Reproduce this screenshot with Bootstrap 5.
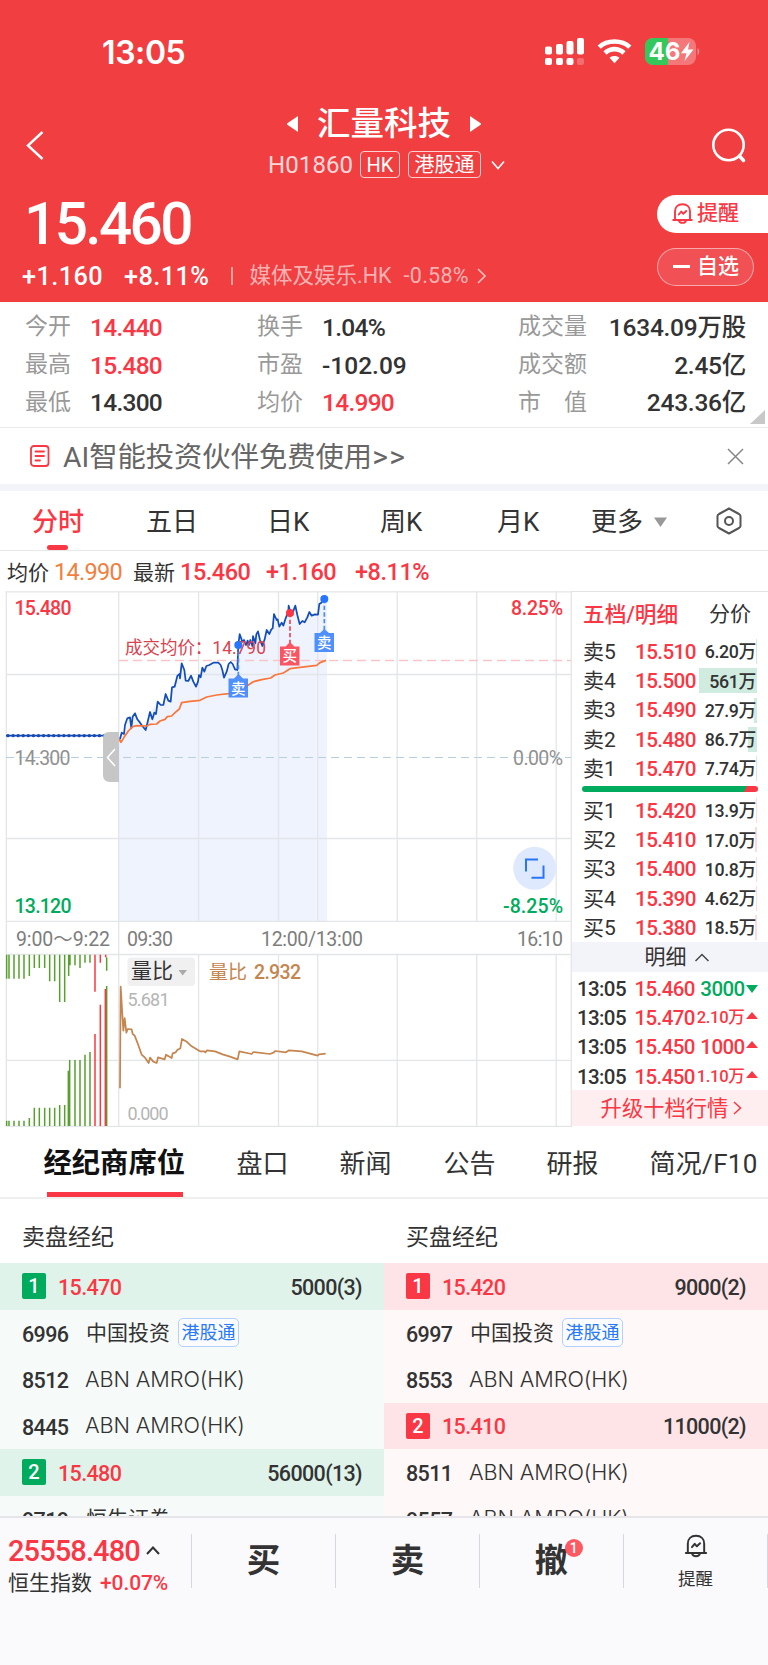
<!DOCTYPE html>
<html lang="zh-CN">
<head>
<meta charset="utf-8">
<meta name="viewport" content="width=device-width, initial-scale=1">
<title>汇量科技 H01860</title>
<link href="https://cdn.jsdelivr.net/npm/bootstrap@5.3.0/dist/css/bootstrap.min.css" rel="stylesheet">
<style>
:root{--up:#fa3744;--down:#00ab5e;--ink:#333;--top:#f03e41}
body{width:768px;height:1665px;overflow:hidden;background:#fff;color:var(--ink);font-family:Roboto,"Noto Sans CJK SC",sans-serif;line-height:1;font-size:22px}
.num{font-family:Roboto,"Noto Sans CJK SC",sans-serif;font-weight:500;letter-spacing:-.03em;white-space:nowrap}
.up{color:var(--up)}.down{color:var(--down)}
svg{display:block;flex:none}
span,div{white-space:nowrap}
/* header */
.hero{height:302px;background:var(--top);color:#fff}
.statusbar{height:97px;padding:0 67px 4px 102px}
.clock{font:600 32px/1 Inter,sans-serif;letter-spacing:-.4px}
.navrow{height:96px;padding:0 22px 0 26px}
.stock{font-size:33.5px;font-weight:500}
.outlined{border:1.5px solid rgba(255,255,255,.75);border-radius:4px;height:27px;font-size:20px}
.price{font-size:58.5px;letter-spacing:-2.6px}
.chg{font-size:25.3px;letter-spacing:.4px}
.pill-a{height:38px;width:111px;background:#fff;color:var(--up);border-radius:19px 0 0 19px;font-size:21px;font-weight:500}
.pill-b{height:38px;width:97px;background:rgba(255,255,255,.1);border:1.5px solid rgba(255,255,255,.5);border-radius:19px;font-size:21px;font-weight:500}
.soft{color:rgba(255,255,255,.62)}
/* statistics */
.stats{height:126px;border-bottom:1.5px solid #ebebeb;display:grid;grid-template-columns:65px 167px 65px 196px 1fr;grid-auto-rows:37.7px;padding:6px 22px 0 25px;align-items:center}
.stats .lbl{color:#999;font-size:23px}
.stats .num{font-size:24.5px;padding-top:3px}
.stats div .num{letter-spacing:-.01em}
.notice{height:56px;padding:0 24px 0 30px;color:#666;font-size:28.3px}
.gapband{height:7px;background:#f2f4f9}
.periods{height:60px;border-bottom:1.5px solid #e8e8e8;display:grid;grid-template-columns:114px 121px 113px 117px 94px 124px 1fr;padding:2px 0 0 32px;align-items:center;font-size:26px}
.periods .on{color:var(--up);font-weight:500}
.periods .on::after{content:"";position:absolute;left:15px;bottom:-15px;width:21px;height:5px;border-radius:3px;background:var(--up)}
.quote{height:40px;display:grid;grid-template-columns:47px 79px 47px 86px 89px 1fr;padding:4px 0 0 7px;align-items:center;font-size:21px}
.quote .num{font-size:23.5px;font-weight:400}
.quote b.num{font-weight:500;letter-spacing:-.02em}
/* order book */
.book{width:196px;height:536px;border-top:1.5px solid #e2e2e2}
.bookhead{height:44px;padding:1px 17px 0 11px;font-size:21.7px}
.lv{height:29.3px;display:grid;grid-template-columns:52px 61px 1fr;margin:0 11px 0 11px;align-items:center;font-size:21px}
.lv span{padding-top:1px}
.lv .num{font-size:20.7px}
.lv .vol{height:25px;font-size:17.8px;letter-spacing:-.02em;padding-right:1px}
.balance{height:6px;margin:2.5px 10px 4px 10px;border-radius:3px;background:linear-gradient(120deg,var(--down) 0 92%,var(--up) 92%)}
.detail{height:30px;background:#f3f4f9;font-size:21px;padding-left:13px}
.tick{height:29.3px;display:grid;grid-template-columns:57.5px 60px 1fr;padding:4px 10.500px 0 5px;align-items:center}
.tick .num{font-size:20.5px}
.tick .sm{font-size:16.6px;letter-spacing:-.02em}
.upgrade{height:36.5px;background:#ffeef0;font-size:21.3px;padding:1px 0 0 3px}
/* broker section */
.sections{height:72px;border-bottom:2px solid #efefef;display:grid;grid-template-columns:193px 103px 104px 103px 103px 1fr;padding:4px 0 0 43.500px;align-items:center;font-size:26px}
.sections .on{font-size:28.3px;font-weight:700;color:#111}
.sections .on::after{content:"";position:absolute;left:3px;bottom:-18.5px;width:136px;height:5px;background:var(--up)}
.brokers{height:317px;overflow:hidden}
.brokers .ttl{height:64px;font-size:23px;padding:13px 0 0 22px}
.side{width:384px;background:#f6fbf9}
.side.buy{background:#fff8f8}
.ttl{background:#fff}
.lvl{height:46.5px;background:#dff3ea;padding:0 22px 0 22px}
.buy .lvl{background:#fee4e7}
.rank{width:24px;height:26px;border-radius:2px;background:var(--down);color:#fff;font-size:20px;font-weight:500;margin-right:12px}
.buy .rank{background:var(--up)}
.lvl .num{font-size:21.5px;padding-top:2px}
.bk{height:46.5px;padding-left:22px}
.bk .num{font-size:21.5px;width:64px;padding-top:3px}
.bk .nm{font-size:21px;padding-top:1px}
.bk .en{font:300 21.7px/1 Inter,sans-serif;letter-spacing:-.1px;margin-left:-1px;padding-top:1px}
.hk{width:61px;height:29px;border:1.5px solid #b4d0fc;border-radius:5px;color:#2878fa;font-size:18px;background:#fafcff}
/* bottom bar */
.dock{height:149px;background:#fafafc;border-top:2px solid #e6e6ea}
.dock .cell{width:144px;height:54px;margin-top:16px;border-right:1.5px solid #d8d8dc;font-size:33.5px;font-weight:700}
.dot{position:absolute;left:30px;top:-5px;width:18px;height:18px;border-radius:50%;background:#fd5963;color:#fff;font-size:14px;font-weight:500}
</style>
</head>
<body>
<svg width="0" height="0" class="position-absolute"><defs>
<g id="bell" fill="none" stroke="currentColor" stroke-linecap="round" stroke-linejoin="round"><path d="M1.2 17H19.8M3 17V8.5C3 4 6 1.2 10.500 1.200S18 4 18 8.500V17M7 17.500C7.500 20.600 13.500 20.600 14 17.500M6.800 11.500L9.300 8.500 11.300 10.800 14.200 8"/></g>
</defs></svg>
<header class="hero">
  <div class="statusbar d-flex align-items-center">
    <div class="clock me-auto" style="padding-top:13px">13:05</div>
    <div class="d-flex align-items-center" style="padding-top:9px">
      <svg width="156" height="28" viewBox="0 0 156 28" fill="#fff">
        <rect x="0" y="9.500" width="7" height="8" rx="2"/><rect x="11" y="7" width="7" height="10.500" rx="2"/><rect x="21.500" y="4" width="7" height="13.500" rx="2"/><rect x="32" y="1" width="7" height="16.500" rx="2"/>
        <rect x="0" y="21" width="7" height="7" rx="2"/><rect x="11" y="21" width="7" height="7" rx="2"/><rect x="21.500" y="21" width="7" height="7" rx="2"/><rect x="32" y="21" width="7" height="7" rx="2" opacity=".25"/>
        <g fill="none" stroke="#fff" stroke-width="4.600"><path d="M54.200 10.200C62 2.600 77 2.600 84.800 10.200"/><path d="M60 16C65.500 10.800 73.500 10.800 79 16"/></g><path d="M64.500 20.700C67 18.400 72 18.400 74.500 20.700L69.500 26.200Z"/>
        <rect x="100" y="1" width="51" height="27" rx="8" opacity=".3"/><path d="M123 1V28H108A8 8 0 0 1 100 20V9A8 8 0 0 1 108 1Z" fill="#34c759"/><path d="M152.500 10.500Q156 14.500 152.500 18.500Z" opacity=".4"/>
        <text x="103.500" y="22.800" font-family="Inter" font-weight="700" font-size="24.500" textLength="32" lengthAdjust="spacingAndGlyphs">46</text><path d="M144.500 5L136 16.200H141.500L139.500 24L148.500 12.600H143Z"/>
      </svg>
    </div>
  </div>
  <div class="navrow d-flex align-items-center">
    <svg width="18" height="29" viewBox="0 0 18 29" fill="none" stroke="#fff" stroke-width="2.400"><path d="M16.500 1L2 14.500 16.500 28"/></svg>
    <div class="flex-fill d-flex flex-column align-items-center" style="padding:0 0 5px 12px">
      <div class="d-flex align-items-center" style="gap:18px">
        <svg width="12" height="16" fill="#fff"><path d="M11 0V16L0 8.500V7.500Z"/></svg><span class="stock">汇量科技</span><svg width="12" height="16" fill="#fff"><path d="M1 0V16L12 8.500V7.500Z"/></svg>
      </div>
      <div class="d-flex align-items-center" style="margin-top:11px;padding-left:5px">
        <span style="font-size:24px;letter-spacing:.1px;width:92px;opacity:.8">H01860</span>
        <span class="outlined d-flex align-items-center justify-content-center" style="width:40px">HK</span>
        <span class="outlined d-flex align-items-center justify-content-center" style="width:73px;margin:0 10px 0 8px">港股通</span>
        <svg width="14" height="10" fill="none" stroke="#fff" stroke-width="1.600"><path d="M1 1.500L7 8.500 13 1.500"/></svg>
      </div>
    </div>
    <svg width="34" height="35" viewBox="0 0 34 35" fill="none" stroke="#fff" stroke-width="2.600" stroke-linecap="round"><circle cx="16.500" cy="17" r="15.200"/><path d="M27.500 28L31.500 32.500" stroke-width="3.500"/></svg>
  </div>
  <div class="d-flex justify-content-between">
    <div style="padding-left:22px">
      <div class="num price" style="padding:2px 0 1px 2px">15.460</div>
      <div class="d-flex align-items-center" style="margin-top:9px">
        <span class="num chg" style="width:102px">+1.160</span><span class="num chg" style="width:107px">+8.11%</span>
        <span class="bg-white opacity-50" style="width:1.500px;height:18px;margin-right:17px"></span>
        <span class="soft" style="font-size:21.500px;width:154px">媒体及娱乐.HK</span><span class="soft" style="font-size:21.500px;letter-spacing:.3px;width:73px">-0.58%</span>
        <svg width="9" height="16" fill="none" stroke="#fff" stroke-width="1.600" opacity=".65"><path d="M1 1L8 8 1 15"/></svg>
      </div>
    </div>
    <div style="padding-top:1.500px">
      <div class="pill-a d-flex align-items-center" style="padding-left:15px"><svg width="21" height="21" viewBox="0 0 21 21" stroke-width="1.900"><use href="#bell"/></svg><span style="margin-left:4px">提醒</span></div>
      <div class="pill-b d-flex align-items-center" style="margin-top:15px;padding-left:15px"><span class="bg-white" style="width:17px;height:2.500px;margin-right:7px"></span>自选</div>
    </div>
  </div>
</header>
<section class="stats position-relative">
  <span class="lbl">今开</span><span class="num up">14.440</span><span class="lbl">换手</span><span class="num">1.04%</span><div class="d-flex justify-content-between align-items-center"><span class="lbl">成交量</span><span class="num">1634.09万股</span></div>
  <span class="lbl">最高</span><span class="num up">15.480</span><span class="lbl">市盈</span><span class="num" style="letter-spacing:0">-102.09</span><div class="d-flex justify-content-between align-items-center"><span class="lbl">成交额</span><span class="num">2.45亿</span></div>
  <span class="lbl">最低</span><span class="num">14.300</span><span class="lbl">均价</span><span class="num up">14.990</span><div class="d-flex justify-content-between align-items-center"><span class="lbl">市<span style="margin-left:23px">值</span></span><span class="num">243.36亿</span></div>
  <svg class="position-absolute" style="right:3px;bottom:3px" width="15" height="14" fill="#c8c8c8"><path d="M15 0V14H0Z"/></svg>
</section>
<section class="notice d-flex align-items-center">
  <svg width="20" height="22" fill="none" stroke="#fa3744" stroke-width="1.800" stroke-linecap="round"><rect x="1" y="1" width="17.500" height="20" rx="3"/><path d="M5.500 6.500H14M5.500 11H14M5.500 15.500H10"/></svg>
  <span style="margin-left:13px;padding-top:4px">AI智能投资伙伴免费使用<span style="font-size:30px;letter-spacing:1.500px;line-height:.8">&gt;&gt;</span></span>
  <svg class="ms-auto" width="17" height="17" fill="none" stroke="#888" stroke-width="1.500"><path d="M1 1L16 16M16 1L1 16"/></svg>
</section>
<div class="gapband"></div>
<nav class="periods">
  <span class="on position-relative">分时</span><span>五日</span><span>日K</span><span>周K</span><span>月K</span>
  <span class="d-flex align-items-center">更多<svg style="margin-left:10px" width="15" height="10" fill="#999"><path d="M1 .5H14L7.500 10Z"/></svg></span>
  <svg style="margin-top:-2px" width="28" height="28" viewBox="0 0 28 28" fill="none" stroke="#555" stroke-width="2" stroke-linejoin="round"><path d="M14 1.500L24 7Q25.500 8 25.500 9V19Q25.500 20 24 21L14 26.500 4 21Q2.500 20 2.500 19V9Q2.500 8 4 7Z"/><circle cx="14" cy="14" r="4"/></svg>
</nav>
<div class="quote">
  <span>均价</span><span class="num" style="color:#f08040">14.990</span><span>最新</span><b class="num up">15.460</b><b class="num up">+1.160</b><b class="num up">+8.11%</b>
</div>
<main class="d-flex">
  <svg width="572" height="536" viewBox="0 591 572 536" font-family='Roboto,"Noto Sans CJK SC",sans-serif' font-size="19.500">
    <g transform="translate(110 590) scale(.33333)"><path fill="#eef3fe" d="M26 993V440L42 432 52 385 60 382 68 380 75 370 90 398 107 420 120 366 143 335 160 345 167 312 182 335 186 292 202 258 215 220 227 272 243 257 258 290 277 233 298 225 325 218 342 263 362 216 382 240 389 132 413 152 427 168 444 124 457 168 470 120 488 115 492 72 508 110 535 65 556 47 569 102 598 66 624 74 628 42 643 27 651 27V993Z"/></g>
    <path fill="none" stroke="#e4e5e8" stroke-width="1.300" d="M6 591.800H572M6 674.500H572M6 838.500H572M6 921.300H572M6 954.500H572M6 1060.300H572M6 1126.300H572M6.300 591V1127M118.700 591V1127M198.600 591V921M278.500 591V921M317.700 591V921M397.200 591V921M476.700 591V921M556.200 591V921M198.600 954V1127M278.500 954V1127M317.700 954V1127M397.200 954V1127M476.700 954V1127M556.200 954V1127M571.300 591V1127"/>
    <path d="M6 757.500H571" stroke="#b9cfdf" stroke-width="1.200" stroke-dasharray="8 5"/>
    <path d="M119 660.500H571" stroke="#f9c5cb" stroke-width="1.300" stroke-dasharray="9 5"/>
    <path d="M6 735.700H107L108 737H119" fill="none" stroke="#134bb3" stroke-width="1.800"/><path d="M8 735.700H106" stroke="#134bb3" stroke-width="3.300" stroke-linecap="round" stroke-dasharray="0 5.080"/>
    <g transform="translate(110 590) scale(.33333)" fill="none" stroke-width="5.200" stroke-linejoin="round">
      <path stroke="#124db8" d="M30 448L35 428 42 432 45 405 52 385 60 382 64 415 68 380 75 370 82 388 90 398 97 408 107 420 112 400 120 366 127 388 133 368 138 372 143 335 152 345 160 345 167 312 175 332 182 335 186 292 194 290 202 258 209 252 210 265 215 220 223 240 227 272 235 273 243 257 250 275 258 290 264 275 267 255 272 262 277 233 283 245 289 228 298 225 310 218 325 218 332 225 337 240 342 263 350 245 356 222 362 216 368 222 375 238 382 240 385 165 389 132 397 155 402 150 408 165 413 152 417 165 421 150 427 168 429 138 436 160 439 133 444 124 450 150 457 168 464 148 470 120 478 132 484 118 488 115 492 72 500 90 503 88 508 110 515 98 520 107 527 85 535 65 536 47 541 66 548 68 556 47 562 75 569 102 577 93 584 97 592 82 598 66 605 77 615 73 624 74 628 42 634 38 643 27"/>
      <path stroke="#f9763a" d="M27 447L33 457 42 442 55 423 68 410 80 407 110 408 120 403 140 402 150 393 165 388 172 380 185 378 195 368 208 357 215 338 240 334 270 331 290 321 320 315 355 311 385 305 415 285 430 275 455 269 482 264 495 255 520 249 540 236 570 232 620 226 630 218 648 211"/>
      <path stroke="#4a8cff" stroke-dasharray="13 7" d="M385 165V262M643 27V125"/><path stroke="#f4485a" stroke-dasharray="13 7" d="M540 69V165"/>
    </g>
    <text x="125" y="653.500" fill="#d9424f" font-size="18" textLength="141" lengthAdjust="spacingAndGlyphs">成交均价：14.790</text>
    <circle cx="238.300" cy="645" r="4" fill="#2675ff"/><circle cx="290" cy="613" r="4" fill="#f83747"/><circle cx="324.300" cy="599" r="4" fill="#2675ff"/>
    <path fill="#468afd" fill-opacity=".95" d="M228.500 678.500H234L238.500 674 243 678.500H248V697.500H228.500ZM314.500 633H320L324.300 629 329 633H334V652H314.500Z"/><path fill="#fa5563" d="M280 646.500H285.500L290 642 294.500 646.500H299.500V665.500H280Z"/>
    <g fill="#fff" font-size="14.500" font-weight="500" text-anchor="middle"><text x="238.300" y="693.500">卖</text><text x="324.300" y="648">卖</text><text x="289.800" y="661">买</text></g>
    <path d="M103 738Q103 732 109 732H119V782H110Q103 782 103 775Z" fill="#c6c6c6"/><path d="M115 749L107.500 757.500 115 766" fill="none" stroke="#fff" stroke-width="1.600"/>
    <g font-weight="500"><text x="14.500" y="615" fill="#fa3744" textLength="57">15.480</text><text x="14.500" y="764.500" fill="#919191" font-weight="400" textLength="56">14.300</text><text x="14.500" y="913" fill="#00ab5e" textLength="57">13.120</text>
    <text x="511" y="615" fill="#fa3744" textLength="52">8.25%</text><text x="513" y="764.500" fill="#919191" font-weight="400" textLength="50">0.00%</text><text x="503" y="913" fill="#00ab5e" textLength="60">-8.25%</text></g>
    <g fill="#7d7d7d"><text x="16" y="945.500" textLength="94">9:00～9:22</text><text x="127" y="945.500" textLength="46">09:30</text><text x="261" y="945.500" textLength="102">12:00/13:00</text><text x="517" y="945.500" textLength="46">16:10</text></g>
    <circle cx="534.700" cy="868.300" r="21.500" fill="#dfe9fe"/><path d="M526 871.500V859.500H538M531.500 877.700H543.500V865.500" fill="none" stroke="#2875fa" stroke-width="2"/>
    <g transform="translate(0 920) scale(.33333)" fill="none" stroke-width="4.500">
      <path stroke="#57a02e" d="M20 104V176M27 104V176M42 104V176M57 104V176M72 104V176M88 104V168M103 104V144M118 104V144M134 104V144M149 104V184M164 104V184M179 104V246M194 104V246M206 104V168M210 104V136M225 104V136M240 104V144M255 104V128M270 104V128M320 112V152M20 602V618M27 602V618M42 602V618M57 602V618M72 602V618M88 594V618M103 563V618M118 563V618M134 563V618M149 563V618M164 563V618M179 555V618M194 555V618M205 452V618M209 420V618M225 420V618M240 420V618M255 404V618M270 396V618M320 198V618"/>
      <path stroke="#fb3840" d="M285 104V215M301 104V128M317 104V112M285 342V618M301 254V618M316 207V618"/>
      <path stroke="#c4854f" stroke-width="5.200" stroke-linejoin="round" d="M360 505L362 200 370 332 374 294 379 338 383 327 395 328 398 342 404 347 413 370 425 404 435 413 446 429 450 413 460 425 470 429 474 412 494 418 498 404 515 414 518 400 527 397 532 390 541 385 546 357 560 365 575 379 600 394 613 394 616 397 621 391 645 394 670 404 690 410 713 418 718 394 755 402 760 396 810 402 822 397 825 393 858 397 867 391 905 394 953 407 957 403 977 401"/>
    </g>
    <rect x="127.500" y="957.500" width="67.500" height="28.500" rx="4" fill="#f0f0f0"/><text x="131" y="978" font-size="21" fill="#333">量比</text><path d="M178.500 970H187L182.700 975.500Z" fill="#aaa"/>
    <text x="209" y="978.500" font-size="19" fill="#c4854f">量比</text><text x="254" y="978.500" fill="#c4854f" font-weight="500" textLength="47">2.932</text>
    <g fill="#b5b5b5" font-size="18"><text x="127.500" y="1005.500" textLength="42">5.681</text><text x="127.500" y="1119.500" textLength="41">0.000</text></g>
  </svg>
  <aside class="book">
    <div class="bookhead d-flex justify-content-between align-items-center"><span class="up" style="font-weight:500">五档/明细</span><span style="font-size:21px">分价</span></div>
    <div style="height:1px"></div>
    <div class="lv"><span>卖5</span><span class="num up">15.510</span><span class="num vol d-flex align-items-center justify-content-end" style="background:linear-gradient(270deg,#d0ebdf 1%,transparent 1%)">6.20万</span></div>
    <div class="lv"><span>卖4</span><span class="num up">15.500</span><span class="num vol d-flex align-items-center justify-content-end" style="background:#d0ebdf;margin-left:3px">561万</span></div>
    <div class="lv"><span>卖3</span><span class="num up">15.490</span><span class="num vol d-flex align-items-center justify-content-end" style="background:linear-gradient(270deg,#d0ebdf 5%,transparent 5%)">27.9万</span></div>
    <div class="lv"><span>卖2</span><span class="num up">15.480</span><span class="num vol d-flex align-items-center justify-content-end" style="background:linear-gradient(270deg,#d0ebdf 15.500%,transparent 15.500%)">86.7万</span></div>
    <div class="lv"><span>卖1</span><span class="num up">15.470</span><span class="num vol d-flex align-items-center justify-content-end" style="background:linear-gradient(270deg,#d0ebdf 1.400%,transparent 1.400%)">7.74万</span></div>
    <div class="balance"></div>
    <div class="lv"><span>买1</span><span class="num up">15.420</span><span class="num vol d-flex align-items-center justify-content-end" style="background:linear-gradient(270deg,#ffdade 2%,transparent 2%)">13.9万</span></div>
    <div class="lv"><span>买2</span><span class="num up">15.410</span><span class="num vol d-flex align-items-center justify-content-end" style="background:linear-gradient(270deg,#ffdade 3%,transparent 3%)">17.0万</span></div>
    <div class="lv"><span>买3</span><span class="num up">15.400</span><span class="num vol d-flex align-items-center justify-content-end" style="background:linear-gradient(270deg,#ffdade 2%,transparent 2%)">10.8万</span></div>
    <div class="lv"><span>买4</span><span class="num up">15.390</span><span class="num vol d-flex align-items-center justify-content-end" style="background:linear-gradient(270deg,#ffdade 1%,transparent 1%)">4.62万</span></div>
    <div class="lv"><span>买5</span><span class="num up">15.380</span><span class="num vol d-flex align-items-center justify-content-end" style="background:linear-gradient(270deg,#ffdade 3%,transparent 3%)">18.5万</span></div>
    <div class="detail d-flex align-items-center justify-content-center">明细<svg class="ms-2" width="14" height="9" fill="none" stroke="#444" stroke-width="1.500"><path d="M.5 8L7 1.500 13.500 8"/></svg></div>
    <div class="tick"><span class="num">13:05</span><span class="num up">15.460</span><span class="num down d-flex align-items-center justify-content-end">3000<svg style="margin-left:1px" width="12" height="8" fill="currentColor"><path d="M0 0H12L6 8Z"/></svg></span></div>
    <div class="tick"><span class="num">13:05</span><span class="num up">15.470</span><span class="num sm up d-flex align-items-center justify-content-end">2.10万<svg style="margin:-6px 0 0 1px" width="12" height="7" fill="currentColor"><path d="M0 7H12L6 0Z"/></svg></span></div>
    <div class="tick"><span class="num">13:05</span><span class="num up">15.450</span><span class="num up d-flex align-items-center justify-content-end">1000<svg style="margin:-6px 0 0 1px" width="12" height="7" fill="currentColor"><path d="M0 7H12L6 0Z"/></svg></span></div>
    <div class="tick"><span class="num">13:05</span><span class="num up">15.450</span><span class="num sm up d-flex align-items-center justify-content-end">1.10万<svg style="margin:-6px 0 0 1px" width="12" height="7" fill="currentColor"><path d="M0 7H12L6 0Z"/></svg></span></div>
    <div class="upgrade up d-flex align-items-center justify-content-center">升级十档行情<svg style="margin-left:5px" width="9" height="14" fill="none" stroke="currentColor" stroke-width="1.500"><path d="M1 1L7.500 7 1 13"/></svg></div>
  </aside>
</main>
<nav class="sections">
  <span class="on position-relative">经纪商席位</span><span>盘口</span><span>新闻</span><span>公告</span><span>研报</span><span style="letter-spacing:.3px">简况/F10</span>
</nav>
<section class="brokers d-flex">
  <div class="side">
    <div class="ttl d-flex align-items-center">卖盘经纪</div>
    <div class="lvl d-flex align-items-center"><span class="rank d-flex align-items-center justify-content-center">1</span><span class="num up">15.470</span><span class="num ms-auto">5000(3)</span></div>
    <div class="bk d-flex align-items-center"><span class="num">6996</span><span class="nm">中国投资</span><span class="hk ms-2 d-flex align-items-center justify-content-center">港股通</span></div>
    <div class="bk d-flex align-items-center"><span class="num">8512</span><span class="en">ABN AMRO(HK)</span></div>
    <div class="bk d-flex align-items-center"><span class="num">8445</span><span class="en">ABN AMRO(HK)</span></div>
    <div class="lvl d-flex align-items-center"><span class="rank d-flex align-items-center justify-content-center">2</span><span class="num up">15.480</span><span class="num ms-auto">56000(13)</span></div>
    <div class="bk d-flex align-items-center"><span class="num">9719</span><span class="nm">恒生证券</span></div>
  </div>
  <div class="side buy">
    <div class="ttl d-flex align-items-center">买盘经纪</div>
    <div class="lvl d-flex align-items-center"><span class="rank d-flex align-items-center justify-content-center">1</span><span class="num up">15.420</span><span class="num ms-auto">9000(2)</span></div>
    <div class="bk d-flex align-items-center"><span class="num">6997</span><span class="nm">中国投资</span><span class="hk ms-2 d-flex align-items-center justify-content-center">港股通</span></div>
    <div class="bk d-flex align-items-center"><span class="num">8553</span><span class="en">ABN AMRO(HK)</span></div>
    <div class="lvl d-flex align-items-center"><span class="rank d-flex align-items-center justify-content-center">2</span><span class="num up">15.410</span><span class="num ms-auto">11000(2)</span></div>
    <div class="bk d-flex align-items-center"><span class="num">8511</span><span class="en">ABN AMRO(HK)</span></div>
    <div class="bk d-flex align-items-center"><span class="num">9557</span><span class="en">ABN AMRO(HK)</span></div>
  </div>
</section>
<footer class="dock d-flex">
  <div class="cell" style="width:192px;padding-left:8px;font-weight:400">
    <div class="d-flex align-items-center" style="margin-top:3px"><span class="num up" style="font-size:29px;letter-spacing:-.9px">25558.480</span><svg style="margin:-2px 0 0 6px" width="14" height="9" fill="none" stroke="#333" stroke-width="2"><path d="M1 8L7 1.500 13 8"/></svg></div>
    <div class="d-flex align-items-center" style="font-size:21px;margin-top:6.500px">恒生指数<span class="num up" style="margin-left:8px;letter-spacing:-.1px">+0.07%</span></div>
  </div>
  <div class="cell d-flex align-items-center justify-content-center">买</div>
  <div class="cell d-flex align-items-center justify-content-center">卖</div>
  <div class="cell d-flex align-items-center justify-content-center"><span class="position-relative">撤<span class="dot d-flex align-items-center justify-content-center">1</span></span></div>
  <div class="cell d-flex flex-column align-items-center justify-content-between" style="font-size:17.500px;font-weight:400"><svg width="24" height="24" viewBox="-.5 0 22 21" stroke-width="1.800"><use href="#bell"/></svg><span>提醒</span></div>
</footer>
<script src="https://cdn.jsdelivr.net/npm/bootstrap@5.3.0/dist/js/bootstrap.bundle.min.js"></script>
</body>
</html>
